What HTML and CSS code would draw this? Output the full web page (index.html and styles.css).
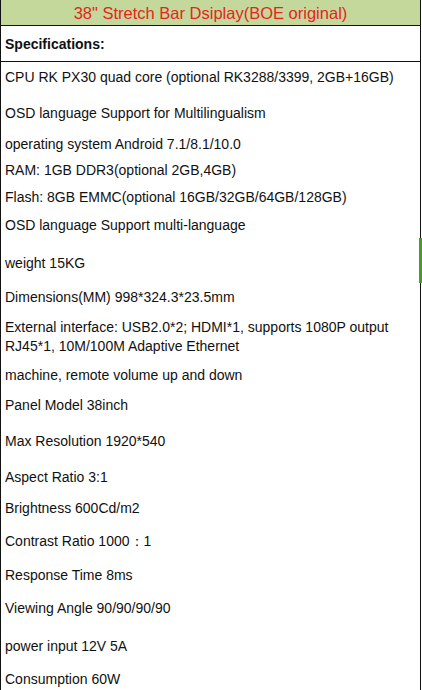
FILE: index.html
```html
<!DOCTYPE html>
<html>
<head>
<meta charset="utf-8">
<link rel="stylesheet" href="styles.css">
</head>
<body>
<div class="sheet">
  <div class="title">38" Stretch Bar Dsiplay(BOE original)</div>
  <div class="section">Specifications:</div>
  <div class="specs">
    <div class="row g7">CPU RK PX30 quad core (optional RK3288/3399, 2GB+16GB)</div>
    <div class="row g20">OSD language Support for Multilingualism</div>
    <div class="row g15">operating system Android 7.1/8.1/10.0</div>
    <div class="row g10">RAM: 1GB DDR3(optional 2GB,4GB)</div>
    <div class="row g11">Flash: 8GB EMMC(optional 16GB/32GB/64GB/128GB)</div>
    <div class="row g12">OSD language Support multi-language</div>
    <div class="row g22">weight 15KG</div>
    <div class="row g18">Dimensions(MM) 998*324.3*23.5mm</div>
    <div class="row g13 two">External interface: USB2.0*2; HDMI*1, supports 1080P output<br>RJ45*1, 10M/100M Adaptive Ethernet</div>
    <div class="row g11">machine, remote volume up and down</div>
    <div class="row g14">Panel Model 38inch</div>
    <div class="row g20">Max Resolution 1920*540</div>
    <div class="row g20">Aspect Ratio 3:1</div>
    <div class="row g15">Brightness 600Cd/m2</div>
    <div class="row g17">Contrast Ratio 1000：1</div>
    <div class="row g18">Response Time 8ms</div>
    <div class="row g17">Viewing Angle 90/90/90/90</div>
    <div class="row g22">power input 12V 5A</div>
    <div class="row g17">Consumption 60W</div>
  </div>
  <div class="marker"></div>
</div>
</body>
</html>
```
FILE: styles.css
```css
html, body {
  margin: 0;
  padding: 0;
  background: #ffffff;
}
body {
  font-family: "Liberation Sans", Arial, sans-serif;
  color: #111111;
  width: 422px;
  height: 690px;
  overflow: hidden;
}
.sheet {
  position: relative;
  width: 421px;
  box-sizing: border-box;
  min-height: 690px;
  border-left: 1px solid #111;
  border-right: 1px solid #111;
}
.title {
  height: 25px;
  line-height: 26px;
  background: #c4d89b;
  color: #e8231c;
  font-size: 16.5px;
  text-align: center;
  border-bottom: 1px solid #111;
}
.section {
  height: 35px;
  line-height: 37px;
  font-weight: bold;
  font-size: 14px;
  padding-left: 4px;
  border-bottom: 1px solid #111;
}
.specs {
  padding-left: 4px;
  font-size: 14px;
}
.row {
  line-height: 16px;
  white-space: nowrap;
}
.row.two { line-height: 19px; }
.g7 { margin-top: 7px; }
.g10 { margin-top: 10px; }
.g11 { margin-top: 11px; }
.g12 { margin-top: 12px; }
.g13 { margin-top: 13px; }
.g14 { margin-top: 14px; }
.g15 { margin-top: 15px; }
.g17 { margin-top: 17px; }
.g18 { margin-top: 18px; }
.g20 { margin-top: 20px; }
.g22 { margin-top: 22px; }
.marker {
  position: absolute;
  right: -2px;
  top: 238px;
  width: 3px;
  height: 45px;
  background: #4a9a2e;
}
```
